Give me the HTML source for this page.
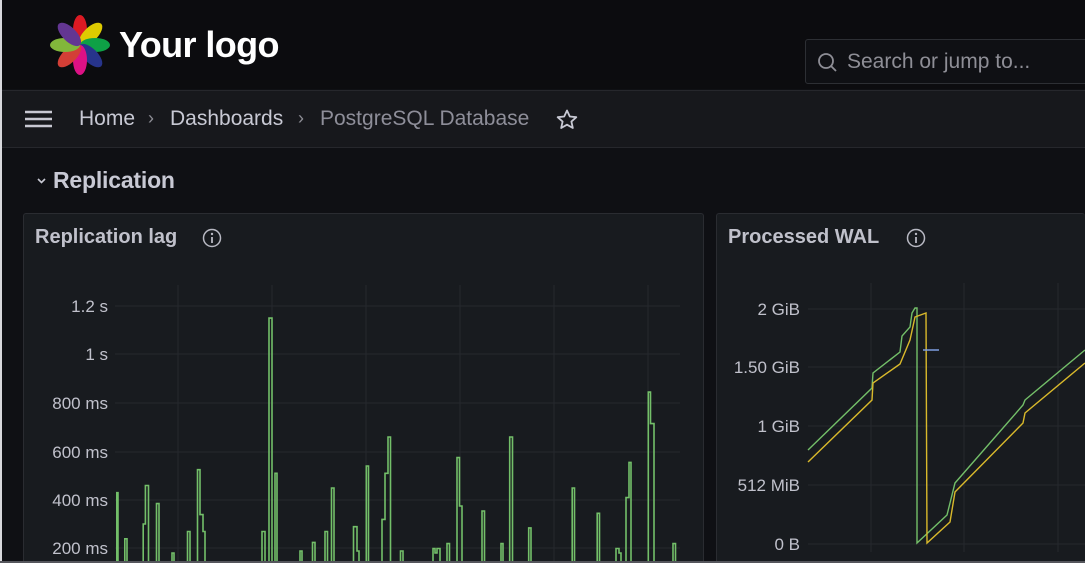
<!DOCTYPE html>
<html><head><meta charset="utf-8"><style>
*{margin:0;padding:0;box-sizing:border-box}
html{width:1085px;height:563px;overflow:hidden}
body{width:1085px;height:563px;overflow:hidden;background:#0f1014;font-family:"Liberation Sans",sans-serif;position:relative}
.top{position:absolute;left:0;top:0;width:1085px;height:89px;background:#0c0c0f}
.crumb{position:absolute;left:0;top:90px;width:1085px;height:58px;background:#17181c;border-top:1px solid #26272c;border-bottom:1px solid #26272c}
.t{position:absolute;white-space:nowrap}
.panel{position:absolute;top:213px;height:350px;background:#181b1f;border:1px solid #2a2c31;border-bottom:none;border-radius:3px 3px 0 0}
</style></head><body>
<div class="top"></div>
<svg style="position:absolute;left:0;top:0" width="120" height="90">
<g transform="translate(80,45)" opacity="0.92">
<ellipse cx="0" cy="-15" rx="7" ry="15" fill="#ee1c25" transform="rotate(0)"/>
<ellipse cx="0" cy="-15" rx="7" ry="15" fill="#f0dc00" transform="rotate(45)"/>
<ellipse cx="0" cy="-15" rx="7" ry="15" fill="#0fae4b" transform="rotate(90)"/>
<ellipse cx="0" cy="-15" rx="7" ry="15" fill="#2a3896" transform="rotate(135)"/>
<ellipse cx="0" cy="-15" rx="7" ry="15" fill="#ee1290" transform="rotate(180)"/>
<ellipse cx="0" cy="-15" rx="7" ry="15" fill="#e4443a" transform="rotate(225)"/>
<ellipse cx="0" cy="-15" rx="7" ry="15" fill="#8dc63f" transform="rotate(270)"/>
<ellipse cx="0" cy="-15" rx="7" ry="15" fill="#6b3a9e" transform="rotate(315)"/>
</g></svg>
<div class="t" style="left:119px;top:24px;font-size:36px;font-weight:bold;color:#fff;letter-spacing:-0.6px">Your logo</div>
<div style="position:absolute;left:805px;top:39px;width:290px;height:45px;border:1px solid #2d2f34;border-radius:3px;background:#0f1014"></div>
<svg style="position:absolute;left:817px;top:52px" width="22" height="22"><circle cx="9" cy="9" r="7" fill="none" stroke="#8e8e96" stroke-width="1.8"/><path d="M14 14 L19 19" stroke="#8e8e96" stroke-width="1.8"/></svg>
<div class="t" style="left:847px;top:50px;font-size:21px;color:#8e8e96">Search or jump to...</div>
<div class="crumb"></div>
<svg style="position:absolute;left:24px;top:109px" width="30" height="22"><path d="M1 3H28M1 10H28M1 17H28" stroke="#c8c8d2" stroke-width="2.4"/></svg>
<div class="t" style="left:79px;top:107px;font-size:21px;color:#c8c9d4">Home</div>
<div class="t" style="left:148px;top:108px;font-size:18px;color:#8e8e96">›</div>
<div class="t" style="left:170px;top:107px;font-size:21px;color:#c8c9d4">Dashboards</div>
<div class="t" style="left:298px;top:108px;font-size:18px;color:#8e8e96">›</div>
<div class="t" style="left:320px;top:107px;font-size:21px;color:#8e8e99">PostgreSQL Database</div>
<svg style="position:absolute;left:555px;top:108px" width="24" height="24"><path d="M12 2.5l2.8 6 6.5.7-4.9 4.4 1.4 6.4L12 16.7 6.2 20l1.4-6.4L2.7 9.2l6.5-.7z" fill="none" stroke="#c8c9d4" stroke-width="1.8" stroke-linejoin="round"/></svg>
<svg style="position:absolute;left:36px;top:177px" width="12" height="8"><path d="M2 2L5.5 5.5L9 2" fill="none" stroke="#c8c9d4" stroke-width="1.6"/></svg>
<div class="t" style="left:53px;top:167px;font-size:23px;font-weight:bold;color:#c8c9d4;letter-spacing:-0.2px">Replication</div>

<div class="panel" style="left:23px;width:681px"></div>
<div class="panel" style="left:716px;width:369px;border-right:none"></div>
<div class="t" style="left:35px;top:226px;font-size:20px;font-weight:bold;color:#c0c1cb">Replication lag</div>
<div class="t" style="left:728px;top:226px;font-size:20px;font-weight:bold;color:#c0c1cb">Processed WAL</div>
<svg style="position:absolute;left:202px;top:228px" width="20" height="20"><circle cx="10" cy="10" r="8.5" fill="none" stroke="#b8b9c3" stroke-width="1.5"/><circle cx="10" cy="6" r="1.2" fill="#b8b9c3"/><path d="M10 9v6" stroke="#b8b9c3" stroke-width="1.8"/></svg>
<svg style="position:absolute;left:906px;top:228px" width="20" height="20"><circle cx="10" cy="10" r="8.5" fill="none" stroke="#b8b9c3" stroke-width="1.5"/><circle cx="10" cy="6" r="1.2" fill="#b8b9c3"/><path d="M10 9v6" stroke="#b8b9c3" stroke-width="1.8"/></svg>

<svg style="position:absolute;left:0;top:0;overflow:hidden" width="1085" height="563" viewBox="0 0 1085 563">
<g stroke="#26282d" stroke-width="1">
<path d="M115 306H680M115 354H680M115 403H680M115 452H680M115 500H680M115 548H680"/>
<path d="M178 285V563M272 285V563M366 285V563M460 285V563M554 285V563M648 285V563"/>
<path d="M808 309H1085M808 367H1085M808 426H1085M808 485H1085M808 544H1085"/>
<path d="M871 283V552M964 283V552M1058 283V552"/>
</g>
<g font-family="Liberation Sans,sans-serif" font-size="17" fill="#c0c1cb" text-anchor="end">
<text x="108" y="312">1.2 s</text><text x="108" y="360">1 s</text><text x="108" y="409">800 ms</text><text x="108" y="458">600 ms</text><text x="108" y="506">400 ms</text><text x="108" y="554">200 ms</text>
<text x="800" y="315">2 GiB</text><text x="800" y="373">1.50 GiB</text><text x="800" y="432">1 GiB</text><text x="800" y="491">512 MiB</text><text x="800" y="550">0 B</text>
</g>
<path fill="none" stroke="#73bf69" stroke-width="1.6" d="M116.8 563V492.7H118V563 M124.8 563V538.8H127V563 M143.2 563V524H145.4V485.5H148.5V563 M156.5 563V503.6H159V563 M172 563V553H174V563 M187.5 563V531.5H190V563 M197.5 563V469.7H200V514.6H203V531.5H205V563 M262 563V531.5H265V563 M269 563V318.1H272V563 M275 563V473.3H277V563 M300 563V551H302V563 M312.5 563V542.4H315V563 M325 563V531.5H327.5V563 M331.5 563V488H334V563 M353.5 563V526.7H357V551H359V563 M366.3 563V466H368.5V563 M382 563V519.4H385V473.3H388V437H390.5V563 M400.5 563V551H403V563 M433 563V548.5H435V553H437V548.5H440V563 M447 563V543.6H449.5V563 M457 563V457.6H459.5V506H462V563 M482 563V511H484.5V563 M501 563V543.6H503V563 M509.7 563V437H512.5V563 M528.7 563V527.9H531V563 M572.2 563V488H574.5V563 M597.2 563V513.3H599.5V563 M616 563V548.5H619V553H621V563 M626 563V497.6H629V462.4H631V563 M648.3 563V392.1H650.5V423.6H654V563 M673 563V543.6H675.5V563"/>
<polyline fill="none" stroke="#73bf69" stroke-width="1.4" points="808,450 872,388 873,373 900,352 902,336 910,327 912,313 915,308 917,308 917,543 947,515 955,483 1023,405 1025,400 1085,350"/>
<polyline fill="none" stroke="#d9b92b" stroke-width="1.4" points="808,462 872,400 873,383 900,364 910,340 915,317 926,313 927,543 950,522 955,492 1023,423 1025,413 1085,363"/>
<path d="M923 350H939" stroke="#7e9ee0" stroke-width="1.5"/>
<rect x="0" y="0" width="2" height="563" fill="#d8d8dc"/>
<rect x="0" y="561" width="1085" height="2" fill="#55565c"/>
</svg>
</body></html>
